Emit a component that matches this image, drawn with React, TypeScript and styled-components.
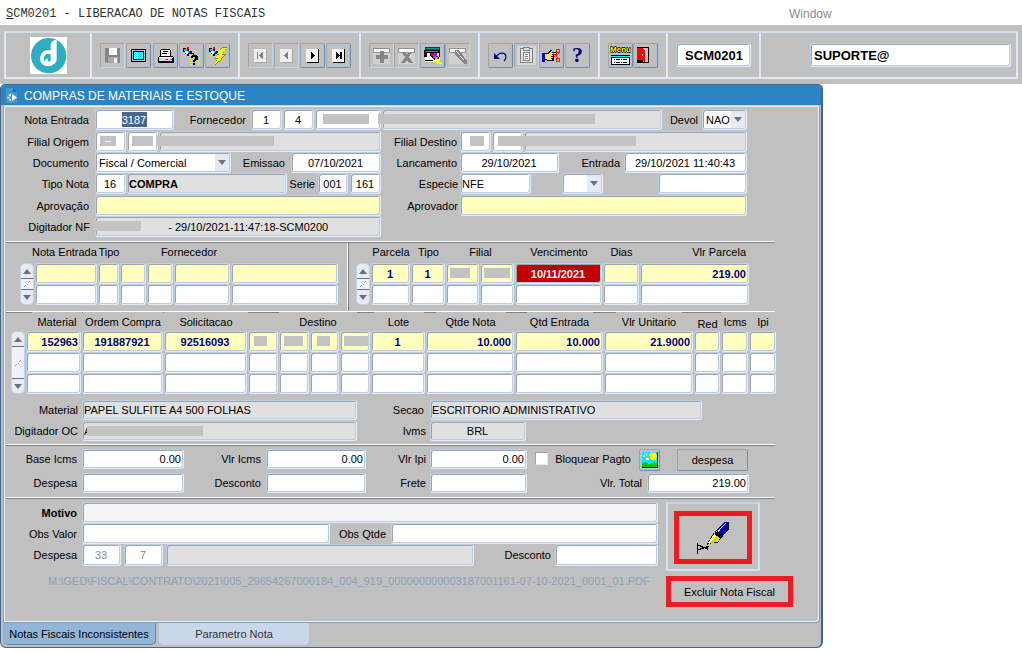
import React from 'react';
import styled, { createGlobalStyle, css } from 'styled-components';

const GlobalStyle = createGlobalStyle`
  * { box-sizing: border-box; }
  body { margin: 0; background: #fff; font: 11px/14px "Liberation Sans", Arial, sans-serif; color: #000; }
  input, select, button { font: inherit; color: inherit; margin: 0; padding: 0; }
`;

const GREY = '#c0c0c0';

/* ---------- menu and toolbar ---------- */

const MenuBar = styled.nav`
  display: flex;
  align-items: center;
  height: 25px;
  padding: 2px 6px 0;
`;
const ProgramMenu = styled.button`
  border: 0;
  background: none;
  font: 12px/16px "Liberation Mono", monospace;
  color: #333;
  flex: 0 0 783px;
  text-align: left;
  &::first-letter { text-decoration: underline; }
`;
const WindowMenu = styled.button`
  border: 0;
  background: none;
  font-size: 12px;
  color: #8c8c8c;
`;
const ToolBand = styled.div`
  background: ${GREY};
  padding: 6px 4px;
  height: 59px;
`;
const ToolFrame = styled.div`
  display: flex;
  height: 48px;
  border: 2px solid #dfe9f6;
  border-top-color: #cfdff0;
`;
const ToolGroup = styled.div<{ $w?: number }>`
  display: flex;
  align-items: center;
  justify-content: space-between;
  padding: 0 8px;
  border-right: 2px solid #dfe9f6;
  ${p => (p.$w ? `flex: 0 0 ${p.$w}px;` : 'flex: 1; padding: 0 5px; border-right: 0; justify-content: flex-end;')}
`;
const LogoGroup = styled(ToolGroup)`
  justify-content: center;
`;
const ToolButton = styled.button`
  width: 25px;
  height: 25px;
  border: 1px solid #a4a4a4;
  border-right-color: #6f8eb0;
  border-bottom-color: #6f8eb0;
  border-radius: 2px;
  background: ${GREY};
  box-shadow: inset -1px -1px 0 #a9bdd4;
  display: grid;
  place-items: center;
  &:disabled { border-right-color: #c3d5e8; border-bottom-color: #c3d5e8; box-shadow: none; }
  svg { display: block; }
`;

/* ---------- window ---------- */

const Window = styled.main`
  width: 100%;
  max-width: 823px;
  border: 1px solid #44648f;
  border-right-width: 2px;
  border-radius: 5px 5px 6px 6px;
  background: ${GREY};
  overflow: hidden;
  padding-bottom: 2px;
`;
const TitleBar = styled.header`
  display: flex;
  align-items: center;
  gap: 6px;
  height: 20px;
  padding-left: 4px;
  background: #2c84c4;
`;
const Title = styled.h1`
  margin: 0;
  padding-top: 2px;
  font: 12px/16px "Liberation Sans", Arial, sans-serif;
  color: #fff;
`;
const Panel = styled.div`
  margin: 0 1px 0 2px;
  border: 1px solid #7e9cc0;
  border-top-color: #c8d4e0;
  border-radius: 2px 2px 4px 0;
  box-shadow: inset 1px 1px 0 #eef2f8, inset -1px -1px 0 #eef2f8;
  padding: 3px 2px 15px 2px;
`;
const Body = styled.div`
  max-width: 769px;
`;
const Divider = styled.hr`
  height: 2px;
  margin: 0;
  border: 0;
  border-top: 1px solid #fff;
  border-bottom: 1px solid #808080;
`;
const Section = styled.section<{ $top?: number; $bottom?: number; $gap?: number }>`
  display: flex;
  flex-direction: column;
  gap: ${p => p.$gap ?? 0}px;
  padding-top: ${p => p.$top ?? 0}px;
  padding-bottom: ${p => p.$bottom ?? 0}px;
`;
const Row = styled.div<{ $h?: number }>`
  display: flex;
  height: ${p => p.$h ?? 21}px;
`;
const Columns = styled.div`
  display: flex;
  max-width: 741px;
`;
const Column = styled.div<{ $w?: number }>`
  display: flex;
  flex-direction: column;
  gap: 1px;
  min-width: 0;
  ${p => (p.$w ? `flex: 0 0 ${p.$w}px;` : 'flex: 1;')}
`;
const Label = styled.label<{ $w: number; $pad?: number; $bold?: boolean }>`
  flex: 0 0 ${p => p.$w}px;
  align-self: center;
  padding-right: ${p => p.$pad ?? 6}px;
  text-align: right;
  white-space: nowrap;
  font-weight: ${p => (p.$bold ? 700 : 400)};
`;

type Tone = 'white' | 'grey' | 'yellow' | 'pale' | 'red';
const tones: Record<Tone, string> = {
  white: '#fff',
  grey: '#e0e0e0',
  yellow: '#ffffc0',
  pale: '#f4f4f4',
  red: '#c00000',
};
const sunken = css`
  border: 1px solid #bdd0e6;
  border-right-color: #e3edf8;
  border-bottom-color: #e3edf8;
  border-radius: 3px;
  box-shadow: inset 1px 1px 0 #9ba3ad, inset -1px -1px 0 #b9cce3;
`;
const FieldBox = styled.span<{ $w?: number; $mr?: number }>`
  position: relative;
  display: block;
  min-width: 0;
  margin-right: ${p => p.$mr ?? 0}px;
  ${p => (p.$w ? `flex: 0 0 ${p.$w}px;` : 'flex: 1;')}
`;
const Input = styled.input<{ $tone?: Tone; $align?: string; $bold?: boolean; $ink?: string; $marked?: boolean }>`
  ${sunken}
  display: block;
  width: 100%;
  height: 100%;
  padding: 0 2px 0 1px;
  outline: 0;
  background: ${p => tones[p.$tone ?? 'white']};
  text-align: ${p => p.$align ?? 'left'};
  font-weight: ${p => (p.$bold ? 700 : 400)};
  color: ${p => p.$ink ?? '#000'};
  ${p => p.$marked && css`
    color: #fff;
    background: linear-gradient(#4a658f, #4a658f) center / 25px 15px no-repeat #fff;
  `}
`;
const Mask = styled.span<{ $x: number; $w: number }>`
  position: absolute;
  z-index: 1;
  top: 5px;
  left: ${p => p.$x}px;
  width: ${p => p.$w}px;
  height: 10px;
  background: #c3c3c3;
  color: #fff;
  line-height: 9px;
  text-align: center;
`;

type FieldProps = {
  id?: string; name?: string; w?: number; mr?: number; value?: string; tone?: Tone;
  align?: string; bold?: boolean; ink?: string; marked?: boolean; mask?: [number, number]; maskText?: string;
};
function Field({ id, name, w, mr, value = '', tone, align, bold, ink, marked, mask, maskText }: FieldProps) {
  return (
    <FieldBox $w={w} $mr={mr}>
      <Input id={id} aria-label={name} defaultValue={value} $tone={tone} $align={align} $bold={bold} $ink={ink} $marked={marked} />
      {mask && <Mask $x={mask[0]} $w={mask[1]}>{maskText}</Mask>}
    </FieldBox>
  );
}

const SelectInput = styled.select`
  ${sunken}
  appearance: none;
  display: block;
  width: 100%;
  height: 100%;
  padding-left: 3px;
  outline: 0;
  background: #fff;
`;
const Arrow = styled.span`
  position: absolute;
  top: 2px;
  right: 2px;
  bottom: 2px;
  width: 14px;
  display: grid;
  place-items: center;
  background: #e4eaf4;
  pointer-events: none;
`;
function Select({ id, name, w, mr, value }: { id?: string; name?: string; w: number; mr?: number; value: string }) {
  return (
    <FieldBox $w={w} $mr={mr}>
      <SelectInput id={id} aria-label={name} defaultValue={value}>
        <option>{value}</option>
      </SelectInput>
      <Arrow><Triangle /></Arrow>
    </FieldBox>
  );
}
const Triangle = ({ up }: { up?: boolean }) => (
  <svg width="8" height="5" viewBox="0 0 8 5" aria-hidden="true">
    <path d={up ? 'M0 5 4 0l4 5z' : 'M0 0h8L4 5z'} fill="#6a7084" />
  </svg>
);

/* ---------- data grids ---------- */

const GridArea = styled.div<{ $left: number; $w?: number }>`
  display: flex;
  align-items: flex-start;
  padding-left: ${p => p.$left}px;
  ${p => (p.$w ? `flex: 0 0 ${p.$w}px;` : 'flex: 1;')}
`;
const Grids = styled.div`
  display: flex;
  height: 68px;
`;
const VerticalDivider = styled.div`
  width: 2px;
  border-left: 1px solid #fff;
  border-right: 1px solid #808080;
`;
const Scroller = styled.div<{ $top: number; $h: number }>`
  display: flex;
  flex-direction: column;
  flex: none;
  width: 14px;
  height: ${p => p.$h}px;
  margin: ${p => p.$top}px 1px 0 0;
  border: 1px solid #c3d3e6;
  border-radius: 5px;
  background: #e6ecf5;
  overflow: hidden;
`;
const ScrollButton = styled.button`
  display: grid;
  place-items: center;
  height: 14px;
  flex: none;
  border: 0;
  background: none;
`;
const Thumb = styled.div`
  flex: 1;
  display: grid;
  place-items: center;
  border-top: 1px solid #6a7084;
  border-bottom: 1px solid #6a7084;
  background: #eef2f8;
`;
function ScrollBar({ top, h }: { top: number; h: number }) {
  return (
    <Scroller $top={top} $h={h}>
      <ScrollButton aria-label="Anterior"><Triangle up /></ScrollButton>
      <Thumb>
        <svg width="7" height="6" viewBox="0 0 7 6" aria-hidden="true" shapeRendering="crispEdges">
          <path d="M5 0h1v1H5zM4 1h1v1H4zM1 4h1v1H1zM0 5h1v1H0zM3 3h1v1H3z" fill="#8fa3bf" />
        </svg>
      </Thumb>
      <ScrollButton aria-label="Proximo"><Triangle /></ScrollButton>
    </Scroller>
  );
}
const Table = styled.table<{ $w: number }>`
  flex: none;
  width: ${p => p.$w}px;
  table-layout: fixed;
  border-collapse: collapse;
`;
const Th = styled.th<{ $h: number; $align?: string }>`
  height: ${p => p.$h}px;
  padding: 0;
  vertical-align: top;
  text-align: ${p => p.$align ?? 'center'};
  font-weight: 400;
  white-space: nowrap;
`;
const HeadText = styled.span<{ $cover?: number; $drop?: number; $align?: string }>`
  display: inline-block;
  padding-top: ${p => p.$drop ?? 2}px;
  ${p => p.$cover && `
    min-width: ${p.$cover}px;
    margin-top: -1px;
    text-align: center;
    padding-top: 3px;
    background: ${GREY};
  `}
  ${p => !p.$cover && p.$align === 'left' && 'margin-left: -3px;'}
  ${p => !p.$cover && p.$align === 'right' && 'margin-right: 4px;'}
`;
const Td = styled.td`
  height: 21px;
  padding: 0 1px 0 0;
`;
const CellBox = styled.span`
  position: relative;
  display: block;
  height: 21px;
`;
type Cell = { v?: string; align?: string; tone?: Tone; ink?: string; mask?: [number, number] };
type Head = { t: string; span?: number; align?: string; cover?: number; drop?: number };
function DataGrid({ name, cols, head, headH, first, blank, tone }: {
  name: string; cols: number[]; head: Head[]; headH: number; first: Cell[]; blank: number; tone: Tone;
}) {
  const rows: Cell[][] = [first, ...Array.from({ length: blank }, () => cols.map(() => ({} as Cell)))];
  return (
    <Table $w={cols.reduce((a, b) => a + b, 0)} aria-label={name}>
      <colgroup>{cols.map((w, i) => <col key={i} width={w} />)}</colgroup>
      <thead>
        <tr>
          {head.map((h, i) => (
            <Th key={i} colSpan={h.span} $h={headH} $align={h.align}>
              {h.t && <HeadText $cover={h.cover} $drop={h.drop} $align={h.align}>{h.t}</HeadText>}
            </Th>
          ))}
        </tr>
      </thead>
      <tbody>
        {rows.map((r, i) => (
          <tr key={i}>
            {r.map((c, j) => (
              <Td key={j}>
                <CellBox>
                  <Input
                    aria-label={`${name} ${i + 1}-${j + 1}`}
                    defaultValue={c.v ?? ''}
                    $tone={i ? 'white' : c.tone ?? tone}
                    $align={c.align ?? 'center'}
                    $bold
                    $ink={c.ink ?? '#000080'}
                  />
                  {c.mask && <Mask $x={c.mask[0]} $w={c.mask[1]} />}
                </CellBox>
              </Td>
            ))}
          </tr>
        ))}
      </tbody>
    </Table>
  );
}

/* ---------- lower part ---------- */

const CheckBox = styled.input`
  appearance: none;
  width: 13px;
  height: 13px;
  && { margin: 3px 7px 0 8px; }
  border: 1px solid #a0a0a0;
  border-right-color: #e3edf8;
  border-bottom-color: #e3edf8;
  background: #fff;
`;
const PlainButton = styled.button<{ $w: number; $ml?: number }>`
  width: ${p => p.$w}px;
  height: 22px;
  && { margin-left: ${p => p.$ml ?? 0}px; }
  border: 1px solid #a4a4a4;
  border-right-color: #6f8eb0;
  border-bottom-color: #6f8eb0;
  border-radius: 2px;
  background: ${GREY};
  svg { display: block; margin: 0 auto; }
`;
const Footer = styled.div`
  display: flex;
  gap: 8px;
  max-width: 788px;
  padding-top: 3px;
`;
const Notes = styled.div`
  flex: 1;
  min-width: 0;
  display: flex;
  flex-direction: column;
`;
const FilePath = styled.a`
  margin: 8px 0 0 42px;
  color: #8aa2bc;
  text-decoration: none;
  white-space: nowrap;
`;
const Actions = styled.div`
  flex: 0 0 128px;
  display: flex;
  flex-direction: column;
  align-items: flex-start;
  gap: 5px;
`;
const SignFrame = styled.div`
  width: 94px;
  height: 69px;
  padding: 7px 5px 5px 6px;
  border: 2px solid #d3e0ef;
  border-top-color: #c3d5e8;
`;
const RedButton = styled.button<{ $sign?: boolean }>`
  display: grid;
  place-items: center;
  width: ${p => (p.$sign ? 78 : 127)}px;
  height: ${p => (p.$sign ? 53 : 31)}px;
  border: 5px solid #ed1c24;
  background: ${GREY};
`;
const Tabs = styled.div`
  display: flex;
  align-items: flex-start;
  gap: 3px;
  padding-left: 2px;
`;
const Tab = styled.button<{ $active?: boolean }>`
  width: ${p => (p.$active ? 153 : 150)}px;
  height: 22px;
  border: 0;
  border-radius: 0 0 5px 5px;
  background: ${p => (p.$active ? '#92b6d8' : '#c9d7ea')};
  color: ${p => (p.$active ? '#000' : '#333')};
  ${p => p.$active && 'border-right: 1px solid #5f83ad; border-bottom: 1px solid #5f83ad;'}
`;

/* ---------- drawings ---------- */

const Icon = ({ children }: { children: React.ReactNode }) => (
  <svg width="23" height="23" viewBox="0 0 23 23" aria-hidden="true" shapeRendering="crispEdges">{children}</svg>
);
const Torch = () => (
  <>
    <path d="M7 3h2v2H7z" fill="#f00" />
    <path d="M3 4h3v1h3v2h3v2h2v2h-2v-1H9v2H7v-2H5V8H3z" fill="#000" />
    <path d="M4 5h3v2h3v2H7V7H4z" fill="#00c8ff" />
    <path d="M5 7h3v3H6z" fill="#fff" />
    <path d="M9 8h3v2H9z" fill="#0000c0" />
  </>
);
const MediaBox = ({ off, children }: { off?: boolean; children: React.ReactNode }) => (
  <Icon>
    <path d="M5 5h13v13H5z" fill={off ? '#eee' : '#f4f4f4'} />
    <path d="M17 5h1v14H6v-1h11z" fill={off ? '#aaa' : '#000'} />
    <g fill={off ? '#808080' : '#000'}>{children}</g>
  </Icon>
);
const icons = {
  save: (
    <Icon>
      <path d="M4 4h15v15H5l-1-1z" fill="#868686" />
      <path d="M8 4h8v7H8z" fill="#fff" />
      <path d="M7 13h10v6H7z" fill="#a8a8a8" />
      <path d="M13 14h3v5h-3z" fill="#eee" />
    </Icon>
  ),
  screen: (
    <Icon>
      <path d="M4 5h15v13H4z" fill="#000" />
      <path d="M5 6h13v11H5z" fill="#c0c0c0" />
      <path d="M6 7h11v9H6z" fill="#000" />
      <path d="M7 8h9v7H7z" fill="#fff" />
      <path d="M7 8h1v1H7zm2 0h1v1H9zm2 0h1v1h-1zm2 0h1v1h-1zm2 0h1v1h-1zM8 9h1v1H8zm2 0h1v1h-1zm2 0h1v1h-1zm2 0h1v1h-1zM7 10h1v1H7zm2 0h1v1H9zm2 0h1v1h-1zm2 0h1v1h-1zm2 0h1v1h-1zM8 11h1v1H8zm2 0h1v1h-1zm2 0h1v1h-1zm2 0h1v1h-1zM7 12h1v1H7zm2 0h1v1H9zm2 0h1v1h-1zm2 0h1v1h-1zm2 0h1v1h-1zM8 13h1v1H8zm2 0h1v1h-1zm2 0h1v1h-1zm2 0h1v1h-1zM7 14h1v1H7zm2 0h1v1H9zm2 0h1v1h-1zm2 0h1v1h-1zm2 0h1v1h-1z" fill="#00d8e8" />
    </Icon>
  ),
  print: (
    <Icon>
      <path d="M7 5h9v1h1v6H6V6h1z" fill="#000" />
      <path d="M7 6h9v6H7z" fill="#fff" />
      <path d="M9 7h5v1H9zM8 9h5v1H8z" fill="#000" />
      <path d="M5 12h14v1h1v6H4v-6h1z" fill="#000" />
      <path d="M5 13h14v1H5z" fill="#fff" />
      <path d="M5 14h13v3H5z" fill="#d8d8d8" />
      <path d="M12 15h2v1h-2z" fill="#e00" />
      <path d="M14 15h3v1h-3z" fill="#ff0" />
      <path d="M16 15h2v1h-2z" fill="#0c0" />
    </Icon>
  ),
  query: (
    <Icon>
      <Torch />
      <path d="M10 11h1v1h-1zm2-1h1v1h-1zm6 1h1v1h-1zm1 2h1v1h-1zm-9 1h1v1h-1zm1 2h1v1h-1zm8-1h1v1h-1zm-1 2h1v1h-1zm1 2h1v1h-1zm-9-1h1v1h-1zm1 2h1v1h-1zm7 0h1v1h-1z" fill="#ff0" />
      <path d="M12 11h5v1h1v4h-2v1h-1v1h-2v-2h1v-1h1v-2h-2v1h-2v-2h1zM13 19h2v2h-2z" fill="#000" />
    </Icon>
  ),
  execute: (
    <Icon>
      <Torch />
      <path d="M16 3h5l-4 7h3l-5 5h2l-8 6 2-6H9l3-4h-1z" fill="#8c8c00" />
      <path d="M16 4h4l-4 7h3l-5 4h2l-7 5 3-6h-2l3-4h-2z" fill="#ff0" />
    </Icon>
  ),
  first: <MediaBox off><path d="M8 8h1v7H8zM14 8v7l-4-3.5z" /></MediaBox>,
  prev: <MediaBox off><path d="M13 8v7l-4-3.5z" /></MediaBox>,
  next: <MediaBox><path d="M10 7v9l4-4.500z" /></MediaBox>,
  last: <MediaBox><path d="M9 8v7l4-3.500zM13 8h2v7h-2z" /></MediaBox>,
  insert: (
    <Icon>
      <path d="M3 4h17v16H3z" fill="#d0d0d0" />
      <path d="M3 4h17v5H3z" fill="#949494" />
      <path d="M4 5h15v3H4z" fill="#fff" />
      <path d="M10 7h4v4h4v4h-4v4h-4v-4H6v-4h4z" fill="#868686" />
    </Icon>
  ),
  remove: (
    <Icon>
      <path d="M3 4h17v16H3z" fill="#d0d0d0" />
      <path d="M3 4h17v5H3z" fill="#949494" />
      <path d="M4 5h15v3H4z" fill="#fff" />
      <path d="M7 8h3l2 3 2-3h3l-3 5 4 6h-4l-2-3-2 3H6l4-6z" fill="#868686" />
    </Icon>
  ),
  lock: (
    <Icon>
      <path d="M4 4h15v14H4z" fill="#fff" />
      <path d="M4 3h15v3H4z" fill="#004848" />
      <path d="M5 4h13v1H5z" fill="#00a0a0" />
      <path d="M3 6h15v3H3z" fill="#000" />
      <path d="M4 7h13v1H4z" fill="#00a0a0" />
      <path d="M3 9h3v4H3zM4 16h8v1H4zM18 5h1v8h-1z" fill="#000" />
      <path d="M9 8h5l2 3 2 3v2h-5l-4-5z" fill="#000" />
      <path d="M10 9h3v3h-3z" fill="#e00" />
      <path d="M12 11h3v3h-3z" fill="#0c0" />
      <path d="M13 9h3v4h-3z" fill="#c0f" />
      <path d="M14 13h3v3h-3z" fill="#f80" />
      <path d="M14 15h4l3 5h-5z" fill="#ff0" />
    </Icon>
  ),
  clear: (
    <Icon>
      <path d="M3 3h17v17H3z" fill="#d0d0d0" />
      <path d="M3 4h17v5H3z" fill="#949494" />
      <path d="M4 5h15v3H4z" fill="#fff" />
      <path d="M9 6h4l8 11v3h-3L9 10z" fill="#868686" />
      <path d="M10 7h1l3 4h-1zM14 12h1l3 4h-1z" fill="#eee" />
    </Icon>
  ),
  undo: (
    <svg width="23" height="23" viewBox="0 0 23 23" aria-hidden="true">
      <path d="M5 9v6h6z" fill="#000080" />
      <path d="M7 13c3-5 9-5 10-1 0 2 0 3-2 5" fill="none" stroke="#000080" strokeWidth="1.200" />
    </svg>
  ),
  paste: (
    <Icon>
      <path d="M2 2h19v19H2z" fill="#d6d6d6" />
      <path d="M5 4h13v15H5z" fill="#808080" />
      <path d="M6 5h11v13H6z" fill="#e4e4e4" />
      <path d="M8 3h7v4H8z" fill="#808080" />
      <path d="M9 4h5v2H9z" fill="#ddd" />
      <path d="M8 8h7v9H8z" fill="#808080" />
      <path d="M9 9h5v7H9z" fill="#f4f4f4" />
      <path d="M10 10h3v1h-3zm0 2h3v1h-3zm0 2h3v1h-3z" fill="#808080" />
    </Icon>
  ),
  hand: (
    <Icon>
      <path d="M2 9h3v9H2z" fill="#0000e0" />
      <path d="M5 9h3l2-3h2v2h5v3h-3v6H8l-3-1z" fill="#000" />
      <path d="M5 10h4l2-3h1v2h4v1h-4v1h1v1h-2v1h2v1h-2v1h1v1H9l-4-1z" fill="#f8e84c" />
      <path d="M16 5h3v3h-3zm0 9h3v3h-3z" fill="none" stroke="#f02020" />
      <path d="M14 13l5-4M14 10l4 4" stroke="#f02020" />
    </Icon>
  ),
  door: (
    <Icon>
      <path d="M3 3h12v16H3z" fill="#000" />
      <path d="M9 4h5v14H9z" fill="#c8c8c8" />
      <path d="M3 4h5l3 3v12l-3-3H3z" fill="#f00" />
      <path d="M8 10h1v2H8z" fill="#fff" />
    </Icon>
  ),
};
const HelpMark = styled.span`
  font: bold 22px/22px "Liberation Serif", serif;
  color: #000080;
`;
const MenuMark = styled.span`
  display: grid;
  justify-items: center;
  width: 21px;
  overflow: hidden;
  font: bold 8px/10px "Liberation Sans", sans-serif;
  color: #ff0;
  text-shadow: 1px 0 #000, -1px 0 #000, 0 1px #000, 0 -1px #000;
`;

const Logo = () => (
  <svg width="37" height="37" viewBox="0 0 111 111" role="img" aria-label="Logo">
    <rect width="111" height="111" fill="#fff" />
    <circle cx="56" cy="56" r="53" fill="#2eadc3" />
    <path d="M64 47C46 40 36 52 36 66s9 16 20 16 16-8 16-16" fill="none" stroke="#fff" strokeWidth="11" />
    <path d="M80 8c-10 1-18 6-18 18v42c0 5-3 7-7 5-3-2-3-5 0-7-6-2-11 2-10 8 1 9 12 12 21 9 9-2 14-8 14-17z" fill="#fff" />
  </svg>
);
const FormMark = () => (
  <svg width="13" height="15" viewBox="0 0 13 15" aria-hidden="true">
    <path d="M1 0h7l4 4v11H1z" fill="#3f98d4" />
    <path d="M8 0v4h4z" fill="#1f6ca8" />
    <path d="M6 7a2.500 2.500 0 1 0 0 5" fill="none" stroke="#fff" strokeWidth="2" strokeDasharray="2 1" />
    <path d="M7 6l5 3.500L7 13z" fill="#fff" />
  </svg>
);
const Picture = () => (
  <svg width="16" height="16" viewBox="0 0 16 16" aria-hidden="true" shapeRendering="crispEdges">
    <path d="M0 0h16v16H0z" fill="#000" />
    <path d="M0 0h15v15H0z" fill="#00e8ff" />
    <path d="M1 3h2v2H1zm3-2h1v3H4zm0 5h3v2H4z" fill="#fff" />
    <path d="M7 2h1V1h1V0h1v1h2V0h1v1h1v2h1v3h-1v2h-2v1h-1V8H9V7H8V5H7z" fill="#ff0" />
    <path d="M0 11h2v-1h2v1h2v1h2v-1h3v-1h2v1h2v4H0z" fill="#00d000" />
    <path d="M3 13h2v1H3zm5 0h2v1H8z" fill="#080" />
  </svg>
);
const Pen = () => (
  <svg width="32" height="33" viewBox="0 0 96 99" aria-hidden="true" shapeRendering="crispEdges">
    <path d="M53 34 84 2h11v22L76 44z" fill="#0000d8" />
    <path d="M58 32 86 5h3L62 35z" fill="#fff" />
    <path d="M94 3v21L78 42" fill="none" stroke="#000" strokeWidth="3" />
    <path d="M52 38l10-8 18 14-8 8z" fill="#000" />
    <path d="M27 73 50 36l22 15-10 15-20 1z" fill="#000" />
    <path d="M33 66 51 39l9 6-22 23z" fill="#ffffa8" />
    <path d="M38 66 60 45l10 6-9 13-18 1z" fill="#e0d800" />
    <path d="M2 66v32M2 72l32 13M2 87l34-11" fill="none" stroke="#000" strokeWidth="4" />
  </svg>
);

const Tool = ({ name, off, children }: { name: string; off?: boolean; children: React.ReactNode }) => (
  <ToolButton title={name} aria-label={name} disabled={off}>{children}</ToolButton>
);

const ToolInput = styled(Input)<{ $w: number }>`
  height: 24px;
  width: ${p => p.$w}px;
  padding-left: 3px;
  font-size: 13px;
`;

/* ---------- page ---------- */

export default function App() {
  return (
    <>
      <GlobalStyle />
      <MenuBar>
        <ProgramMenu>SCM0201 - LIBERACAO DE NOTAS FISCAIS</ProgramMenu>
        <WindowMenu>Window</WindowMenu>
      </MenuBar>
      <ToolBand>
        <ToolFrame>
          <LogoGroup $w={86}><Logo /></LogoGroup>
          <ToolGroup $w={148}>
            <Tool name="Salvar" off>{icons.save}</Tool>
            <Tool name="Tela">{icons.screen}</Tool>
            <Tool name="Imprimir">{icons.print}</Tool>
            <Tool name="Consultar">{icons.query}</Tool>
            <Tool name="Executar">{icons.execute}</Tool>
          </ToolGroup>
          <ToolGroup $w={121}>
            <Tool name="Primeiro" off>{icons.first}</Tool>
            <Tool name="Registro anterior" off>{icons.prev}</Tool>
            <Tool name="Proximo registro">{icons.next}</Tool>
            <Tool name="Ultimo">{icons.last}</Tool>
          </ToolGroup>
          <ToolGroup $w={119}>
            <Tool name="Inserir" off>{icons.insert}</Tool>
            <Tool name="Remover" off>{icons.remove}</Tool>
            <Tool name="Bloquear">{icons.lock}</Tool>
            <Tool name="Limpar" off>{icons.clear}</Tool>
          </ToolGroup>
          <ToolGroup $w={120}>
            <Tool name="Desfazer">{icons.undo}</Tool>
            <Tool name="Colar" off>{icons.paste}</Tool>
            <Tool name="Recortar">{icons.hand}</Tool>
            <Tool name="Ajuda"><HelpMark>?</HelpMark></Tool>
          </ToolGroup>
          <ToolGroup $w={68}>
            <Tool name="Menu">
              <MenuMark>
                Menu
                <svg width="19" height="10" viewBox="0 0 19 10" aria-hidden="true" shapeRendering="crispEdges">
                  <path d="M0 0h19v10H0z" fill="#000" />
                  <path d="M0 1h19v1H0z" fill="#0ff" />
                  <path d="M1 3h17v6H1z" fill="#fff" />
                  <path d="M3 4h1v1H3zm2 0h4v1H5zm5 0h1v1h-1zm2 0h4v1h-4zM3 7h1v1H3zm2 0h4v1H5zm5 0h1v1h-1zm2 0h4v1h-4z" fill="#000" />
                </svg>
              </MenuMark>
            </Tool>
            <Tool name="Sair">{icons.door}</Tool>
          </ToolGroup>
          <ToolGroup $w={93}>
            <ToolInput $w={75} aria-label="Programa" defaultValue="SCM0201" $align="center" $bold />
          </ToolGroup>
          <ToolGroup>
            <ToolInput $w={201} aria-label="Usuario" defaultValue="SUPORTE@" $bold />
          </ToolGroup>
        </ToolFrame>
      </ToolBand>

      <Window>
        <TitleBar>
          <FormMark />
          <Title>COMPRAS DE MATERIAIS E ESTOQUE</Title>
        </TitleBar>
        <Panel>
          <Body>
            <Section $bottom={4} $gap={1}>
              <Columns>
                <TopRow>
                  <Label htmlFor="nota" $w={89}>Nota Entrada</Label>
                  <Field id="nota" w={79} value="3187" align="center" marked />
                  <Label htmlFor="forn" $w={77} $pad={5}>Fornecedor</Label>
                  <Field id="forn" w={31} mr={1} value="1" align="center" />
                  <Field name="Fornecedor loja" w={31} mr={1} value="4" align="center" />
                  <Field name="Fornecedor codigo" w={66} mr={1} mask={[8, 46]} />
                  <Field name="Fornecedor nome" tone="grey" mask={[-4, 217]} />
                  <Label htmlFor="devol" $w={40} $pad={4}>Devol</Label>
                  <Select id="devol" w={45} value="NAO" />
                </TopRow>
              </Columns>
              <Columns>
                <Column $w={375}>
                  <div>
                    <Row>
                      <Label htmlFor="fo" $w={89}>Filial Origem</Label>
                      <Field id="fo" w={31} mr={1} mask={[5, 16]} maskText="–" />
                      <Field name="Filial origem 2" w={31} mr={1} mask={[5, 21]} />
                      <Field name="Filial origem nome" tone="grey" mask={[-2, 117]} />
                    </Row>
                    <Row>
                      <Label htmlFor="doc" $w={89}>Documento</Label>
                      <Select id="doc" w={136} value="Fiscal / Comercial" />
                      <Label htmlFor="emi" $w={60}>Emissao</Label>
                      <Field id="emi" value="07/10/2021" align="center" />
                    </Row>
                    <Row>
                      <Label htmlFor="tn" $w={89}>Tipo Nota</Label>
                      <Field id="tn" w={31} mr={1} value="16" align="center" />
                      <Field name="Tipo nota nome" value="COMPRA" bold tone="grey" />
                      <Label htmlFor="serie" $w={31} $pad={3}>Serie</Label>
                      <Field id="serie" w={30} mr={2} value="001" align="center" />
                      <Field name="Serie 2" w={31} value="161" align="center" />
                    </Row>
                  </div>
                  <div>
                    <Row>
                      <Label htmlFor="apr" $w={89}>Aprovação</Label>
                      <Field id="apr" tone="yellow" />
                    </Row>
                    <Row>
                      <Label htmlFor="dig" $w={89} $pad={5}>Digitador NF</Label>
                      <Field id="dig" value="       - 29/10/2021-11:47:18-SCM0200" align="center" tone="grey" mask={[-1, 47]} />
                    </Row>
                  </div>
                </Column>
                <Column>
                  <div>
                    <Row>
                      <Label htmlFor="fd" $w={79} $pad={3}>Filial Destino</Label>
                      <Field id="fd" w={31} mr={1} mask={[10, 14]} />
                      <Field name="Filial destino 2" w={31} mr={1} mask={[6, 24]} />
                      <Field name="Filial destino nome" tone="grey" mask={[-2, 114]} />
                    </Row>
                    <Row>
                      <Label htmlFor="lan" $w={79} $pad={3}>Lancamento</Label>
                      <Field id="lan" w={99} value="29/10/2021" align="center" />
                      <Label htmlFor="ent" $w={65} $pad={4}>Entrada</Label>
                      <Field id="ent" value="29/10/2021 11:40:43" align="center" />
                    </Row>
                    <Row>
                      <Label htmlFor="esp" $w={79} $pad={2}>Especie</Label>
                      <Field id="esp" w={71} mr={31} value="NFE" />
                      <Select name="Especie tipo" w={41} mr={55} value="" />
                      <Field name="Especie numero" />
                    </Row>
                  </div>
                  <Row>
                    <Label htmlFor="aprov" $w={79} $pad={2}>Aprovador</Label>
                    <Field id="aprov" tone="yellow" />
                  </Row>
                </Column>
              </Columns>
            </Section>

            <Divider />
            <Grids>
              <GridArea $left={14} $w={341}>
                <ScrollBar top={20} h={42} />
                <DataGrid
                  name="Notas"
                  cols={[63, 22, 27, 27, 57, 108]}
                  headH={20}
                  tone="yellow"
                  blank={1}
                  head={[{ t: 'Nota Entrada', align: 'left' }, { t: 'Tipo' }, { t: '' }, { t: 'Fornecedor', span: 2 }, { t: '' }]}
                  first={[{}, {}, {}, {}, {}, {}]}
                />
              </GridArea>
              <VerticalDivider />
              <GridArea $left={7}>
                <ScrollBar top={20} h={42} />
                <DataGrid
                  name="Parcelas"
                  cols={[40, 35, 34, 35, 88, 37, 110]}
                  headH={20}
                  tone="yellow"
                  blank={1}
                  head={[
                    { t: 'Parcela' }, { t: 'Tipo' }, { t: 'Filial', span: 2 }, { t: 'Vencimento' },
                    { t: 'Dias' }, { t: 'Vlr Parcela', align: 'right' },
                  ]}
                  first={[
                    { v: '1' }, { v: '1' }, { mask: [4, 20] }, { mask: [4, 26] },
                    { v: '10/11/2021', tone: 'red', ink: '#fff' }, {}, { v: '219.00', align: 'right' },
                  ]}
                />
              </GridArea>
            </Grids>
            <Divider />
            <GridArea $left={5}>
              <ScrollBar top={18} h={63} />
              <DataGrid
                name="Materiais"
                cols={[56, 82, 84, 31, 31, 30, 31, 55, 89, 89, 90, 27, 28, 28]}
                headH={18}
                tone="yellow"
                blank={2}
                head={[
                  { t: 'Material', cover: 50, align: 'right' }, { t: 'Ordem Compra', cover: 80 },
                  { t: 'Solicitacao', cover: 84 }, { t: '' },
                  { t: 'Destino', span: 3, cover: 78, align: 'left' }, { t: 'Lote', cover: 50 },
                  { t: 'Qtde Nota', cover: 70 }, { t: 'Qtd Entrada', cover: 66 },
                  { t: 'Vlr Unitario', cover: 66 }, { t: 'Red', drop: 4 },
                  { t: 'Icms', cover: 28 }, { t: 'Ipi', cover: 28 },
                ]}
                first={[
                  { v: '152963', align: 'right' }, { v: '191887921' }, { v: '92516093' }, { mask: [6, 13] },
                  { mask: [5, 19] }, { mask: [7, 13] }, { mask: [4, 24] }, { v: '1' },
                  { v: '10.000', align: 'right' }, { v: '10.000', align: 'right' },
                  { v: '21.9000', align: 'right' }, {}, {}, {},
                ]}
              />
            </GridArea>

            <Section $top={6} $bottom={3} $gap={1}>
              <Row $h={20}>
                <Label htmlFor="mat" $w={76} $pad={4}>Material</Label>
                <Field id="mat" w={275} value="PAPEL SULFITE A4 500 FOLHAS" tone="grey" />
                <Label htmlFor="sec" $w={73} $pad={6}>Secao</Label>
                <Field id="sec" w={272} value="ESCRITORIO ADMINISTRATIVO" tone="grey" />
              </Row>
              <Row $h={20}>
                <Label htmlFor="doc2" $w={76} $pad={4}>Digitador OC</Label>
                <Field id="doc2" w={275} value="A" tone="grey" mask={[5, 116]} />
                <Label htmlFor="ivms" $w={73} $pad={4}>Ivms</Label>
                <Field id="ivms" w={96} value="BRL" align="center" tone="grey" />
              </Row>
            </Section>
            <Divider />
            <Section $top={3} $bottom={4} $gap={4}>
              <Row $h={20}>
                <Label htmlFor="bi" $w={76} $pad={5}>Base Icms</Label>
                <Field id="bi" w={102} value="0.00" align="right" />
                <Label htmlFor="vi" $w={82} $pad={5}>Vlr Icms</Label>
                <Field id="vi" w={100} value="0.00" align="right" />
                <Label htmlFor="vp" $w={64} $pad={4}>Vlr Ipi</Label>
                <Field id="vp" w={97} value="0.00" align="right" />
                <CheckBox type="checkbox" id="bloq" />
                <Label htmlFor="bloq" $w={84} $pad={8}>Bloquear Pagto</Label>
                <PlainButton $w={21} aria-label="Imagem"><Picture /></PlainButton>
                <PlainButton $w={71} $ml={17}>despesa</PlainButton>
              </Row>
              <Row $h={20}>
                <Label htmlFor="desp" $w={76} $pad={5}>Despesa</Label>
                <Field id="desp" w={102} />
                <Label htmlFor="desc" $w={82} $pad={5}>Desconto</Label>
                <Field id="desc" w={100} />
                <Label htmlFor="frete" $w={64} $pad={4}>Frete</Label>
                <Field id="frete" w={97} />
                <Label htmlFor="total" $w={120} $pad={5}>Vlr. Total</Label>
                <Field id="total" w={102} value="219.00" align="right" />
              </Row>
            </Section>
            <Divider />
          </Body>
          <Footer>
            <Notes>
              <Row>
                <Label htmlFor="mot" $w={76} $pad={5} $bold>Motivo</Label>
                <Field id="mot" tone="pale" />
              </Row>
              <Row>
                <Label htmlFor="ov" $w={76} $pad={5}>Obs Valor</Label>
                <Field id="ov" w={248} />
                <Label htmlFor="oq" $w={61} $pad={5}>Obs Qtde</Label>
                <Field id="oq" />
              </Row>
              <Row $h={22}>
                <Label htmlFor="d1" $w={76} $pad={5}>Despesa</Label>
                <Field id="d1" w={39} mr={3} value="33" align="center" ink="#8c8c8c" />
                <Field name="Despesa 2" w={39} mr={3} value="7" align="center" ink="#8c8c8c" />
                <Field name="Despesa nome" tone="grey" />
                <Label htmlFor="d2" $w={81} $pad={4}>Desconto</Label>
                <Field id="d2" w={103} />
              </Row>
              <FilePath href="#pdf">M:\GED\FISCAL\CONTRATO\2021\005_29654267000184_004_919_000000000003187001161-07-10-2021_0001_01.PDF</FilePath>
            </Notes>
            <Actions>
              <SignFrame><RedButton $sign aria-label="Assinar"><Pen /></RedButton></SignFrame>
              <RedButton>Excluir Nota Fiscal</RedButton>
            </Actions>
          </Footer>
        </Panel>
        <Tabs>
          <Tab $active>Notas Fiscais Inconsistentes</Tab>
          <Tab>Parametro Nota</Tab>
        </Tabs>
      </Window>
    </>
  );
}

const TopRow = styled.div`
  display: flex;
  flex: 1;
  height: 21px;
`;
